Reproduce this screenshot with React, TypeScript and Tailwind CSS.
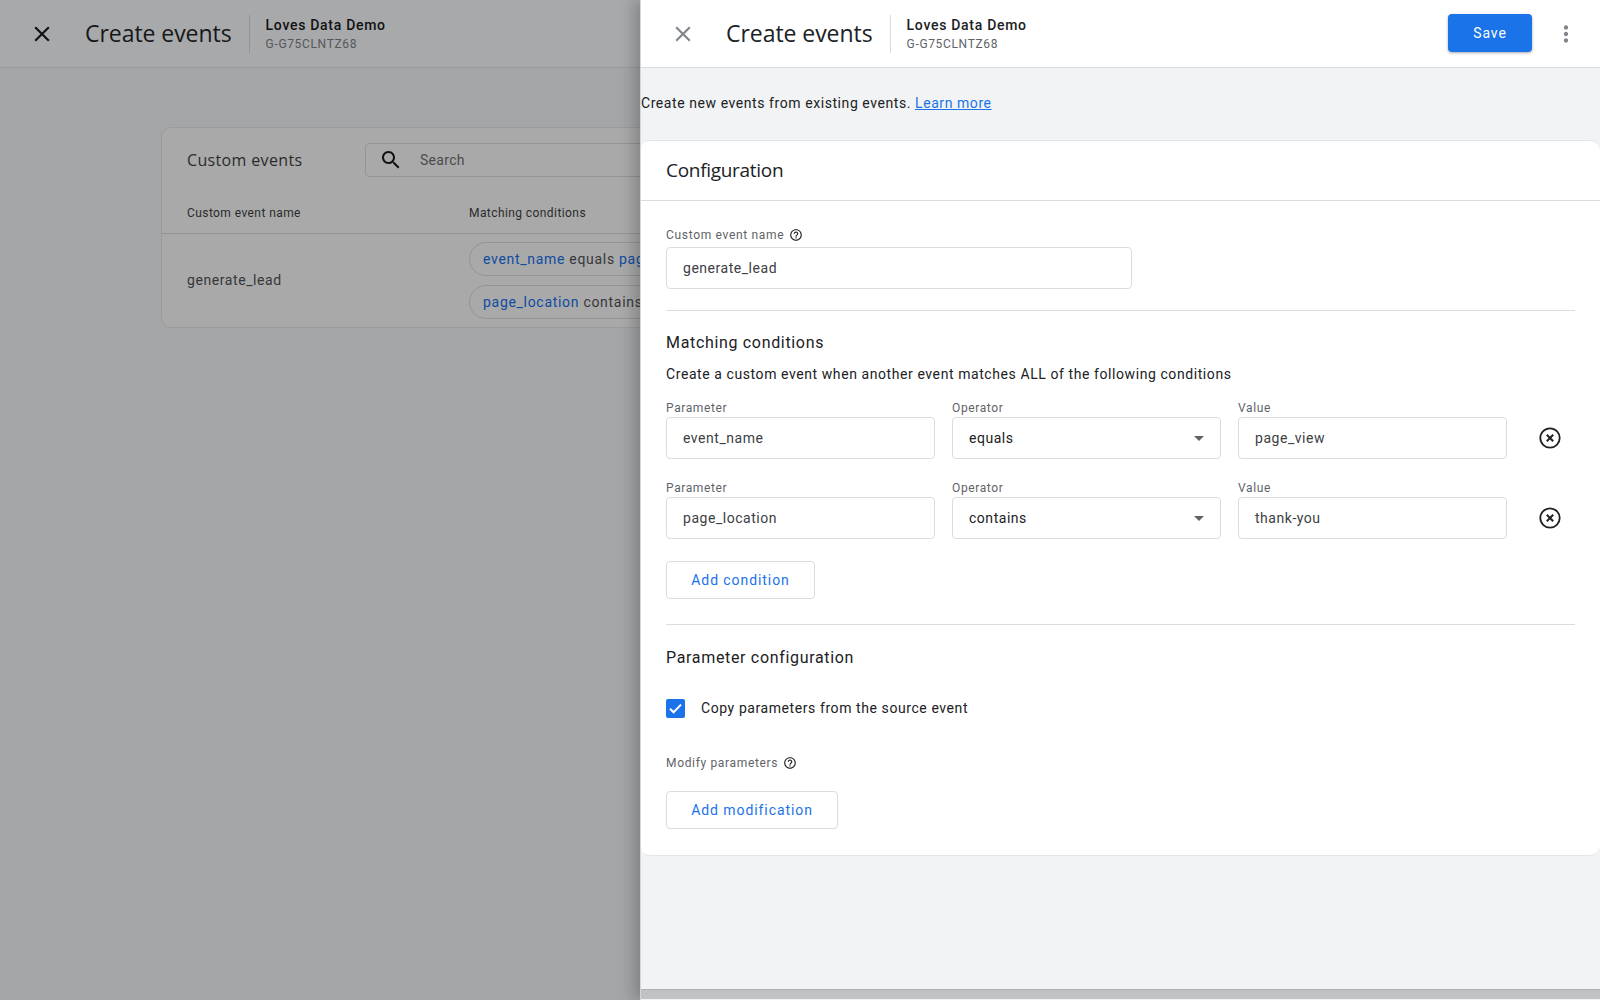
import React from "react";

const CLOSE = "M19 6.41 17.59 5 12 10.59 6.41 5 5 6.41 10.59 12 5 17.59 6.41 19 12 13.41 17.59 19 19 17.59 13.41 12z";
const HELP = "M11 18h2v-2h-2v2zm1-16C6.48 2 2 6.48 2 12s4.48 10 10 10 10-4.48 10-10S17.52 2 12 2zm0 18c-4.41 0-8-3.59-8-8s3.59-8 8-8 8 3.59 8 8-3.59 8-8 8zm0-14c-2.21 0-4 1.79-4 4h2c0-1.1.9-2 2-2s2 .9 2 2c0 2-3 1.75-3 5h2c0-2.25 3-2.5 3-5 0-2.21-1.79-4-4-4z";
const MORE = "M12 8c1.1 0 2-.9 2-2s-.9-2-2-2-2 .9-2 2 .9 2 2 2zm0 2c-1.1 0-2 .9-2 2s.9 2 2 2 2-.9 2-2-.9-2-2-2zm0 6c-1.1 0-2 .9-2 2s.9 2 2 2 2-.9 2-2-.9-2-2-2z";
const SEARCH = "M15.5 14h-.79l-.28-.27C15.41 12.59 16 11.11 16 9.5 16 5.91 13.09 3 9.5 3S3 5.91 3 9.5 5.91 16 9.5 16c1.61 0 3.09-.59 4.23-1.57l.27.28v.79l5 4.99L20.49 19l-4.99-5zm-6 0C7.01 14 5 11.99 5 9.5S7.01 5 9.5 5 14 7.01 14 9.5 11.99 14 9.5 14z";

function Icon({ d, size, className }: { d: string; size: number; className?: string }) {
  return (
    <svg width={size} height={size} viewBox="0 0 24 24" fill="currentColor" className={className}>
      <path d={d} />
    </svg>
  );
}

function RemoveIcon() {
  return (
    <svg width="22" height="22" viewBox="0 0 22 22" fill="none" stroke="#202124" className="shrink-0">
      <circle cx="11" cy="11" r="9.7" strokeWidth="1.8" />
      <path d="M7.8 7.8l6.4 6.4M14.2 7.8l-6.4 6.4" strokeWidth="2" />
    </svg>
  );
}

function HeaderBar({ dim }: { dim?: boolean }) {
  return (
    <>
      <div className={dim ? "w-[85px] shrink-0 pl-[29px] text-[#111213]" : "w-[85px] shrink-0 pl-[29px] text-[#80868b]"}>
        <Icon d={CLOSE} size={26} />
      </div>
      <div className={`font-['Open_Sans'] text-[23px] tracking-[-0.05px] whitespace-nowrap ${dim ? "text-[#17181a]" : "text-[#202124]"}`}>
        Create events
      </div>
      <div className={`w-px h-[38px] ml-[17px] mr-[16px] ${dim ? "bg-[#939496]" : "bg-[#dadce0]"}`} />
      <div className="flex flex-col">
        <div className={`text-[14px] leading-[20px] font-[460] tracking-[0.7px] ${dim ? "text-[#111213]" : "text-[#202124]"}`}>
          Loves Data Demo
        </div>
        <div className={`text-[12px] leading-[18px] tracking-[0.65px] ${dim ? "text-[#55575a]" : "text-[#5f6368]"}`}>
          G-G75CLNTZ68
        </div>
      </div>
    </>
  );
}

function Background() {
  return (
    <div className="h-screen bg-[#a4a5a7] flex flex-col">
      <div className="h-[68px] shrink-0 bg-[#a8a9ab] border-b border-[#98999b] flex items-center">
        <HeaderBar dim />
      </div>
      <div className="ml-[161px] mt-[59px] w-[700px] h-[201px] rounded-[10px] border border-[#9a9b9d] bg-[#a9a9a9]">
        <div className="h-[64px] flex items-center pl-[25px]">
          <div className="w-[178px] font-['Open_Sans'] text-[16px] tracking-[0.35px] text-[#2a2b2c]">Custom events</div>
          <div className="flex-1 h-[34px] border border-[#939496] rounded-[4px] flex items-center pl-[13px]">
            <Icon d={SEARCH} size={24} className="text-[#111213]" />
            <span className="ml-[17px] text-[14px] tracking-[0.3px] text-[#4a4b4d]">Search</span>
          </div>
        </div>
        <div className="h-[42px] flex items-center pl-[25px] border-b border-[#939496] text-[12px] font-[450] text-[#2a2b2c] tracking-[0.42px]">
          <div className="w-[282px]">Custom event name</div>
          <div>Matching conditions</div>
        </div>
        <div className="h-[93px] flex items-center pl-[25px]">
          <div className="w-[282px] text-[14px] text-[#36373a] tracking-[0.58px]">generate_lead</div>
          <div className="flex-1 flex flex-col gap-[9px]">
            <div className="h-[34px] rounded-l-full border border-[#939496] pl-[13px] flex items-center text-[14px] tracking-[0.7px] text-[#36373a] whitespace-nowrap">
              <span className="text-[#0f4ba0] font-[450]">event_name</span>&nbsp;equals&nbsp;<span className="text-[#0f4ba0] font-[450]">page_view</span>
            </div>
            <div className="h-[34px] rounded-l-full border border-[#939496] pl-[13px] flex items-center text-[14px] tracking-[0.7px] text-[#36373a] whitespace-nowrap">
              <span className="text-[#0f4ba0] font-[450]">page_location</span>&nbsp;contains&nbsp;<span className="text-[#0f4ba0] font-[450]">thank-you</span>
            </div>
          </div>
        </div>
      </div>
    </div>
  );
}

function Field({ label, value, select, dark }: { label: string; value: string; select?: boolean; dark?: boolean }) {
  return (
    <div className="w-[269px] shrink-0 flex flex-col">
      <div className="h-[18px] text-[12px] leading-[18px] tracking-[0.62px] text-[#5f6368]">{label}</div>
      <div className="h-[42px] border border-[#dadce0] rounded-[4px] bg-white pl-[16px] pr-[16px] flex items-center justify-between">
        <span className={`text-[14px] tracking-[0.53px] ${dark ? "text-[#202124]" : "text-[#3c4043]"}`}>{value}</span>
        {select && <div className="w-0 h-0 border-x-[5.5px] border-x-transparent border-t-[5.5px] border-t-[#5f6368]" />}
      </div>
    </div>
  );
}

function ConditionRow({ p, o, v }: { p: string; o: string; v: string }) {
  return (
    <div className="flex items-end gap-[17px]">
      <Field label="Parameter" value={p} />
      <Field label="Operator" value={o} select dark />
      <Field label="Value" value={v} />
      <div className="h-[42px] flex items-center ml-[15px]">
        <RemoveIcon />
      </div>
    </div>
  );
}

function OutlineButton({ label, width }: { label: string; width: string }) {
  return (
    <div className={`${width} h-[38px] border border-[#dadce0] rounded-[4px] bg-white flex items-center justify-center text-[14px] font-[450] tracking-[0.92px] text-[#1a73e8]`}>
      {label}
    </div>
  );
}

function Panel() {
  return (
    <div className="absolute inset-y-0 right-0 w-[960px] bg-[#f1f3f4] border-l border-[#d5d6d8] shadow-[-6px_0_14px_rgba(0,0,0,0.22)] flex flex-col">
      <div className="h-[68px] shrink-0 bg-white border-b border-[#dadce0] flex items-center">
        <HeaderBar />
        <div className="ml-auto flex items-center">
          <div className="w-[84px] h-[38px] mb-px rounded-[4px] bg-[#1a73e8] shadow-[0_1px_3px_rgba(60,64,67,0.45)] flex items-center justify-center text-[14px] font-[450] tracking-[0.92px] text-white">
            Save
          </div>
          <div className="ml-[21px] mr-[21px] text-[#80868b]">
            <Icon d={MORE} size={26} />
          </div>
        </div>
      </div>

      <div className="pt-[25px] h-[72px] shrink-0 text-[14px] leading-[20px] tracking-[0.57px] text-[#202124] whitespace-nowrap">
        Create new events from existing events.{" "}
        <span className="text-[#1a73e8] underline">Learn more</span>
      </div>

      <div className="h-[716px] shrink-0 bg-white rounded-tl-[8px] rounded-bl-[8px] rounded-r-[10px] border-y border-[#e3e4e7] flex flex-col">
        <div className="h-[60px] shrink-0 pl-[25px] flex items-center border-b border-[#dadce0] font-['Open_Sans'] text-[19px] tracking-[-0.3px] text-[#202124]">
          Configuration
        </div>
        <div className="pl-[25px] pr-[25px] flex flex-col">
          <div className="mt-[25px] h-[18px] flex items-center gap-[5px] text-[12px] tracking-[0.68px] text-[#5f6368]">
            Custom event name
            <Icon d={HELP} size={14} className="text-[#202124]" />
          </div>
          <div className="mt-[3px] w-[466px] h-[42px] border border-[#dadce0] rounded-[4px] pl-[16px] flex items-center text-[14px] tracking-[0.53px] text-[#3c4043]">
            generate_lead
          </div>
          <div className="mt-[21px] h-px bg-[#dadce0]" />

          <div className="mt-[21px] h-[22px] flex items-center text-[16px] font-[450] tracking-[0.67px] text-[#202124]">
            Matching conditions
          </div>
          <div className="mt-[10px] h-[20px] flex items-center text-[14px] tracking-[0.58px] text-[#202124]">
            Create a custom event when another event matches ALL of the following conditions
          </div>
          <div className="mt-[15px] flex flex-col gap-[20px]">
            <ConditionRow p="event_name" o="equals" v="page_view" />
            <ConditionRow p="page_location" o="contains" v="thank-you" />
          </div>
          <div className="mt-[22px]">
            <OutlineButton label="Add condition" width="w-[149px]" />
          </div>
          <div className="mt-[25px] h-px bg-[#dadce0]" />

          <div className="mt-[22px] h-[22px] flex items-center text-[16px] font-[450] tracking-[0.67px] text-[#202124]">
            Parameter configuration
          </div>
          <div className="mt-[30px] flex items-center h-[19px]">
            <div className="w-[19px] h-[19px] rounded-[2px] bg-[#1a73e8] flex items-center justify-center">
              <svg width="15" height="15" viewBox="0 0 15 15" fill="none" stroke="white" strokeWidth="2">
                <path d="M2 7.7l3.6 3.6L13 3.6" />
              </svg>
            </div>
            <span className="ml-[16px] text-[14px] tracking-[0.58px] text-[#202124]">Copy parameters from the source event</span>
          </div>
          <div className="mt-[36px] h-[18px] flex items-center gap-[5px] text-[12px] tracking-[0.66px] text-[#5f6368]">
            Modify parameters
            <Icon d={HELP} size={14} className="text-[#202124]" />
          </div>
          <div className="mt-[19px]">
            <OutlineButton label="Add modification" width="w-[172px]" />
          </div>
        </div>
      </div>

      <div className="mt-auto mb-px h-[10px] shrink-0 bg-[#c1c2c4] border-t border-[#aeafb1]" />
    </div>
  );
}

export default function App() {
  return (
    <div className="relative h-screen w-full overflow-hidden font-['Roboto',sans-serif]">
      <Background />
      <Panel />
    </div>
  );
}
